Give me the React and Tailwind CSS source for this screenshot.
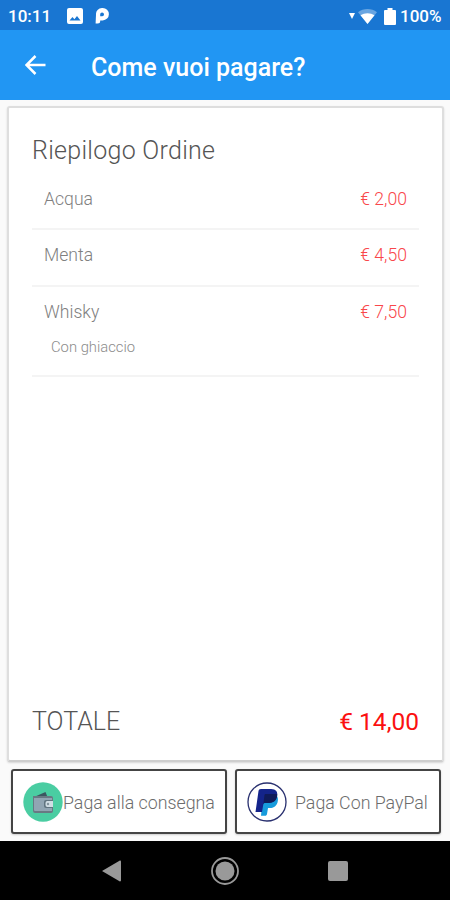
import React from "react";

const items = [
  { name: "Acqua", price: "€ 2,00" },
  { name: "Menta", price: "€ 4,50" },
  { name: "Whisky", price: "€ 7,50", note: "Con ghiaccio" },
];

const StatusBar = () => (
  <div className="flex h-[30px] items-center bg-[#1976d2] pl-2 pr-[7px] pt-[2px] text-[17px] font-medium text-white">
    <span className="w-[59px] leading-none">10:11</span>
    <svg className="h-4 w-4" viewBox="0 0 16 16">
      <path
        fill="#fff"
        fillRule="evenodd"
        d="M2 0h12a2 2 0 0 1 2 2v12a2 2 0 0 1-2 2H2a2 2 0 0 1-2-2V2a2 2 0 0 1 2-2ZM2.500 12.500h11L10 8l-2.600 3.200L5.500 9Z"
      />
    </svg>
    <svg className="ml-3 h-4 w-[14px]" viewBox="0 0 14 16">
      <path
        fill="#fff"
        fillRule="evenodd"
        d="M1 6.500A6 6 0 0 1 7 0h.7a6.200 6.200 0 0 1 0 12.400H5.200v.6a2.500 2.500 0 0 1-2.500 2.500H.6ZM5.200 8.200h2.100a1.900 1.900 0 1 0-2.100-1.900Z"
      />
    </svg>
    <div className="flex-1" />
    <svg className="h-[6px] w-[6px]" viewBox="0 0 6 6">
      <path fill="#fff" d="M0 0h6L3 6Z" />
    </svg>
    <svg className="ml-[3px] h-[15px] w-[19px]" viewBox="0 0 19 15">
      <path fill="#fff" fillOpacity=".35" d="M0 3.300C5.500-1 13.500-1 19 3.300L9.500 15Z" />
      <path fill="#fff" d="M2.500 6.300C6.500 3.400 12.500 3.400 16.500 6.300L9.500 15Z" />
    </svg>
    <svg className="ml-[7px] h-[17px] w-3" viewBox="0 0 12 17">
      <path fill="#fff" d="M3.500 0h5v2H11a1 1 0 0 1 1 1v13a1 1 0 0 1-1 1H1a1 1 0 0 1-1-1V3a1 1 0 0 1 1-1h2.500Z" />
    </svg>
    <span className="ml-[4px] w-[43px] leading-none">100%</span>
  </div>
);

const Header = () => (
  <header className="flex h-[70px] items-center bg-[#2196f3] pl-[25px] text-white">
    <svg className="h-5 w-[21px]" viewBox="0 0 21 20" fill="none" stroke="#fff" strokeWidth="2.500">
      <path d="M20.500 10H2M10.500 1L1.500 10l9 9" />
    </svg>
    <h1 className="ml-[45px] pt-[5px] text-[25px] font-medium leading-none">
      Come vuoi pagare?
    </h1>
  </header>
);

const OrderItem = ({ item }) => (
  <li className="border-b-2 border-[#f4f4f4] pl-3 pr-3 pb-[17.500px] pt-[13px] text-[17.600px] font-light leading-6">
    <div className="flex justify-between">
      <span className="text-[#808080]">{item.name}</span>
      <span className="text-[#f9474b]">{item.price}</span>
    </div>
    {item.note && (
      <p className="-mb-[1px] pl-[7px] pt-[13.500px] text-[14.800px] leading-[21px] text-[#8c8c8c]">
        {item.note}
      </p>
    )}
  </li>
);

const WalletIcon = () => (
  <svg className="h-10 w-10 shrink-0" viewBox="0 0 40 40">
    <circle cx="20" cy="20" r="19.700" fill="#4acda2" />
    <path fill="#3c5660" d="M11 15L22.500 10l2 5Z" />
    <path fill="#687983" d="M10 14h18a2 2 0 0 1 2 2v13a2 2 0 0 1-2 2H12a2 2 0 0 1-2-2Z" />
    <path fill="#91a5b3" d="M11 16h18v13H12a1 1 0 0 1-1-1Z" />
    <path fill="#607480" d="M23 18h7v8h-7a2 2 0 0 1-2-2v-4a2 2 0 0 1 2-2Z" />
    <path fill="#d0dde4" d="M24 19h6v6h-6a2 2 0 0 1-1.500-2v-2a2 2 0 0 1 1.500-2Z" />
    <circle cx="25" cy="22" r="1.200" fill="#84949e" />
  </svg>
);

const PaypalIcon = () => (
  <svg className="h-10 w-10 shrink-0" viewBox="0 0 40 40">
    <circle cx="20" cy="20" r="19" fill="#fff" stroke="#29306f" strokeWidth="1.300" />
    <path
      fill="#179bdc"
      d="M16 12h12c3 2 3.500 5 2.500 8.500-1.400 4-4 5.500-7.500 5.500h-2l-1 6c-.2 1.200-.8 1.800-2 1.800h-4Z"
    />
    <path
      fill="#14248b"
      d="M14 7h10c5 0 7 3 6 7-1 5-4 7-9 7h-3c-1 0-1.500.5-1.700 1.500L15 30H8.500L11.500 9c.2-1.300.9-2 2.500-2Z"
    />
    <path
      fill="#101b5a"
      d="M18 12h11.500l.8.500c0 5-3.300 8.500-9.300 8.500h-3c-1 0-1.500.5-1.700 1.500L17.500 13Z"
    />
  </svg>
);

const App = () => {
  return (
    <div className="flex h-[900px] w-[450px] flex-col overflow-hidden bg-[#fafafa] font-['Roboto',sans-serif]">
      <StatusBar />
      <Header />

      {/* Order summary */}
      <main className="ml-[7px] mr-[6px] mt-[6px] flex h-[656px] flex-col rounded-[3px] border-2 border-[#dedede] border-b-[#cecece] bg-white px-[23px] shadow-[0_1px_2px_#d5d5d5]">
        <h2 className="pt-[28px] text-[25px] font-light leading-[30px] tracking-[0.28px] text-[#555]">
          Riepilogo Ordine
        </h2>
        <ul className="pt-[7.500px]">
          {items.map((item) => (
            <OrderItem key={item.name} item={item} />
          ))}
        </ul>
        <div className="mt-auto flex justify-between pb-[23px] text-[25px] leading-[30px]">
          <span className="font-light text-[#555]">TOTALE</span>
          <span className="text-[24.500px] text-[#fb1010]">€ 14,00</span>
        </div>
      </main>

      {/* Payment buttons */}
      <div className="flex gap-2 pl-[11px] pt-[7px]">
        <button className="flex h-[65px] w-[216px] items-center rounded-[3px] border-2 border-[#444] bg-white pl-[10px] text-[17.800px] font-light text-[#6c6c6c] shadow-[0_1px_2px_#ccc]">
          <WalletIcon />
          <span className="whitespace-nowrap pt-[3px]">Paga alla consegna</span>
        </button>
        <button className="flex h-[65px] w-[206px] items-center rounded-[3px] border-2 border-[#444] bg-white pl-[10px] text-[17.800px] font-light text-[#6c6c6c] shadow-[0_1px_2px_#ccc]">
          <PaypalIcon />
          <span className="whitespace-nowrap pl-2 pt-[3px]">Paga Con PayPal</span>
        </button>
      </div>

      {/* Android navigation */}
      <nav className="mt-auto flex h-[59px] items-center bg-black pl-[102px]">
        <svg className="h-[22px] w-[19px]" viewBox="0 0 19 22">
          <path fill="#999" d="M0 11L17.500 .8c.8-.5 1.500 0 1.500.9v18.600c0 .9-.7 1.400-1.500.9Z" />
        </svg>
        <svg className="ml-[90px] h-7 w-7" viewBox="0 0 28 28">
          <circle cx="14" cy="14" r="13" fill="none" stroke="#999" strokeWidth="1.800" />
          <circle cx="14" cy="14" r="9.500" fill="#999" />
        </svg>
        <div className="ml-[89px] h-5 w-5 rounded-[2px] bg-[#999]" />
      </nav>
    </div>
  );
};

export default App;
